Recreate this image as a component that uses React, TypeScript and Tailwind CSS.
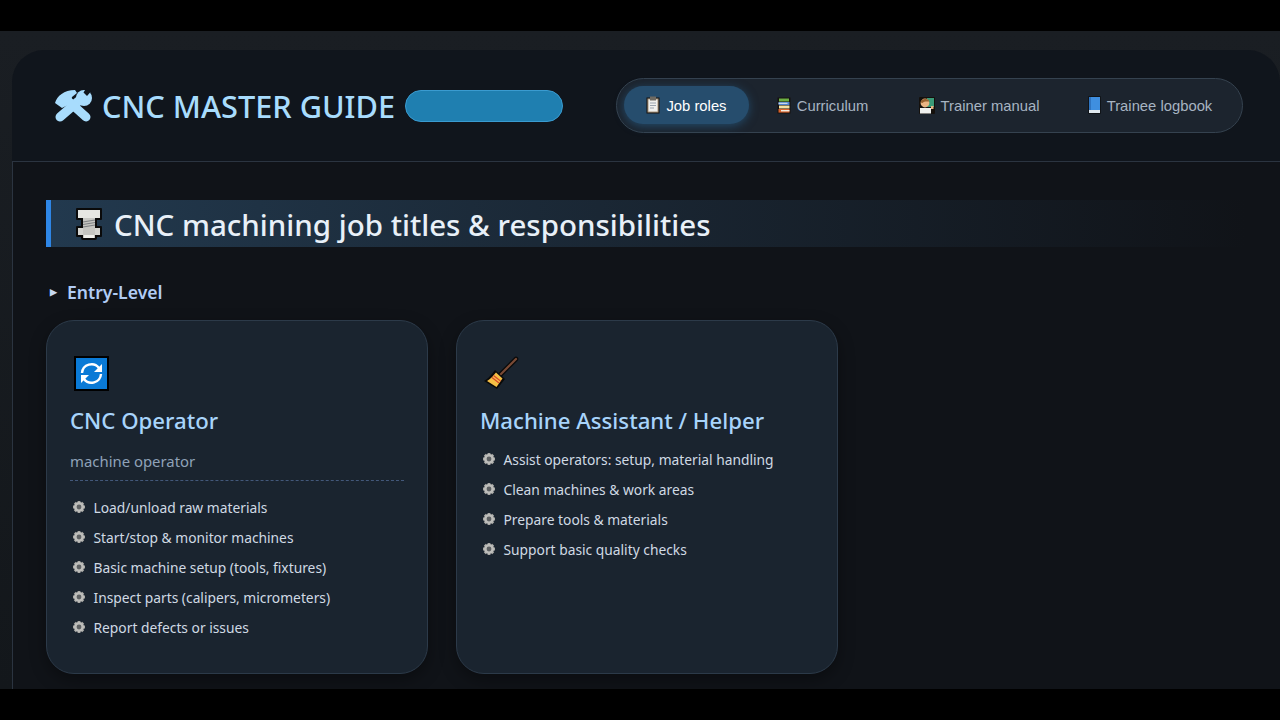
const sans = "font-['Noto_Sans','Open_Sans',sans-serif]"

// ─── Icons ────────────────────────────────────────────────────────────────────

function Tools() {
  return (
    <svg width="37" height="34" viewBox="0 0 37 34" className="shrink-0">
      <g fill="none" stroke="#a8dcfd" strokeLinecap="round">
        <path d="M5 28 L 27 9" strokeWidth="9" />
        <path d="M31 28 L 11 10" strokeWidth="9" />
      </g>
      <path d="M0 14 C 2 7 9 1 20 1 L 22 4 L 17 8 L 15 15 L 7 19 Z" fill="#a8dcfd" />
      <circle cx="29" cy="9" r="8" fill="#a8dcfd" />
      <path d="M38 0 L 32 7 L 28.5 3.5 L 32 -2 Z" fill="#10151c" />
    </svg>
  )
}

function Bolt() {
  return (
    <svg width="26" height="32" viewBox="0 0 26 32" className="shrink-0">
      <rect x="0" y="0" width="26" height="12" rx="1" fill="#0a0a0a" />
      <rect x="0" y="18" width="26" height="11" rx="1" fill="#0a0a0a" />
      <rect x="5" y="8" width="16" height="24" rx="2" fill="#0a0a0a" />
      <rect x="2" y="2" width="22" height="8" fill="#e6e6e2" />
      <rect x="2" y="20" width="22" height="7" fill="#d4d4d0" />
      <rect x="7" y="10" width="12" height="20" fill="#c6c6c2" />
      <path d="M7 14 L19 12 M7 16.5 L19 14.5 M7 19 L19 17" stroke="#7d8084" strokeWidth="1.1" />
      <rect x="8" y="27" width="10" height="3" fill="#f0f0ec" />
    </svg>
  )
}

function Repeat() {
  return (
    <svg width="35" height="35" viewBox="0 0 35 35" className="shrink-0">
      <rect x="1" y="1" width="33" height="33" fill="#0a7ad6" stroke="#000" strokeWidth="2" />
      <g fill="none" stroke="#fff" strokeWidth="2.4">
        <path d="M8 17 A 9.5 9.5 0 0 1 25 12" />
        <path d="M27 18 A 9.5 9.5 0 0 1 10 23" />
      </g>
      <path d="M28 8 V 16 H 20 Z M7 27 V 19 H 15 Z" fill="#fff" />
    </svg>
  )
}

function Broom() {
  return (
    <svg width="36" height="36" viewBox="0 0 36 36" className="shrink-0">
      <path d="M32 3 L 16 19" stroke="#0a0a0a" strokeWidth="4.6" strokeLinecap="round" />
      <path d="M32 3 L 16 19" stroke="#7a4a35" strokeWidth="2.2" strokeLinecap="round" />
      <path d="M11 14 L 21 23 L 13 33 L 0 25 C 4 23 8 18 11 14 Z" fill="#0a0a0a" />
      <path d="M12 16.5 L 18.5 22.5 L 12.5 31 L 3 25 C 6.5 23 10 19 12 16.5 Z" fill="#f5bf45" />
      <path d="M9.5 19.5 L 16.5 25 M8 21.5 L 15 27" stroke="#d8452c" strokeWidth="1.1" />
    </svg>
  )
}

function Gear() {
  return (
    <svg width="14" height="14" viewBox="0 0 14 14" className="shrink-0">
      <g stroke="#a9a9a6" strokeWidth="2.8">
        <path d="M7 1V13M1 7H13M2.8 2.8L11.2 11.2M11.2 2.8L2.8 11.2" />
      </g>
      <circle cx="7" cy="7" r="5" fill="#bdbdba" />
      <circle cx="7" cy="7" r="2.4" fill="#5d6062" />
    </svg>
  )
}

function Clipboard() {
  return (
    <svg width="14" height="18" viewBox="0 0 14 18" className="shrink-0">
      <rect x=".5" y="1.5" width="13" height="16" fill="#171310" />
      <rect x="1.5" y="2.5" width="11" height="14" fill="#a9977f" />
      <rect x="2.5" y="3.5" width="9" height="12" fill="#eff0ee" />
      <rect x="4" y=".5" width="6" height="4" fill="#6e6a62" />
      <path d="M4 7H10M4 9.5H10M4 12H8" stroke="#9aa4b0" strokeWidth="1" />
    </svg>
  )
}

function Books() {
  return (
    <svg width="14" height="17" viewBox="0 0 14 17" className="shrink-0">
      <rect x=".5" y=".5" width="13" height="16" fill="#15110e" />
      <rect x="2" y="1.5" width="10" height="3" fill="#6cb044" />
      <rect x="1.5" y="5" width="11" height="3" fill="#4f86d0" />
      <rect x="1.5" y="5.8" width="9" height="1" fill="#e8ecef" />
      <rect x="2" y="8.5" width="10.5" height="3" fill="#f3e2a3" />
      <rect x="1.5" y="12" width="11" height="3.6" fill="#d8622c" />
      <rect x="4" y="13" width="8.5" height="1.4" fill="#f2ede2" />
    </svg>
  )
}

function Teacher() {
  return (
    <svg width="16" height="17" viewBox="0 0 16 17" className="shrink-0">
      <rect x="0" y="0" width="16" height="17" fill="#14100c" rx="1" />
      <rect x="8" y="1" width="7" height="9" fill="#3a9a78" />
      <circle cx="6" cy="6" r="4.4" fill="#e9b483" />
      <path d="M1.6 5.5C1.6 1.5 9.5.5 10.5 4.5C8 4.5 5 4 3.5 6Z" fill="#96602f" />
      <rect x="1" y="11" width="11" height="5.5" fill="#eef0ee" />
      <rect x="12" y="9" width="2.5" height="3" fill="#e9b483" />
    </svg>
  )
}

function BlueBook() {
  return (
    <svg width="13" height="18" viewBox="0 0 13 18" className="shrink-0">
      <rect x="0" y="0" width="13" height="18" rx="1" fill="#101418" />
      <rect x="1" y="1" width="11" height="13" fill="#3f8fe0" />
      <rect x="1" y="14" width="11" height="3" fill="#dfe8ef" />
      <rect x="1" y="1" width="2" height="13" fill="#2f74c0" />
    </svg>
  )
}

// ─── Data ─────────────────────────────────────────────────────────────────────

const NAV = [
  { label: 'Curriculum', icon: <Books />, w: 'w-[147px]' },
  { label: 'Trainer manual', icon: <Teacher />, w: 'w-[166px]' },
  { label: 'Trainee logbook', icon: <BlueBook />, w: 'w-[176px]' },
]

const OPERATOR = [
  'Load/unload raw materials',
  'Start/stop & monitor machines',
  'Basic machine setup (tools, fixtures)',
  'Inspect parts (calipers, micrometers)',
  'Report defects or issues',
]

const HELPER = [
  'Assist operators: setup, material handling',
  'Clean machines & work areas',
  'Prepare tools & materials',
  'Support basic quality checks',
]

// ─── Parts ────────────────────────────────────────────────────────────────────

function Duties({ items }: { items: string[] }) {
  return (
    <ul className="flex flex-col gap-[10px]">
      {items.map(t => (
        <li key={t} className="flex h-[20px] items-center gap-[7.5px] pl-[2px] text-[13.8px] leading-[20px] text-[#d0dae4]">
          <span className="-mt-[3px]"><Gear /></span>
          {t}
        </li>
      ))}
    </ul>
  )
}

function Card({ icon, title, subtitle, items }: { icon: React.ReactNode; title: string; subtitle?: string; items: string[] }) {
  return (
    <div className="h-[354px] w-[382px] rounded-[28px] border border-[#2c3a49] bg-[#1a242f] px-[23px] pt-[35px] shadow-[0_6px_16px_rgba(0,0,0,0.35)]">
      <div className="ml-[4px] h-[35px]">{icon}</div>
      <h3 className="mt-[14px] text-[22.2px] font-medium leading-[32px] text-[#a8d4fb]">{title}</h3>
      {subtitle && (
        <div className="mt-[14px] h-[30px] border-b border-dashed border-[#43587a] text-[14.9px] leading-[20px] text-[#8fa2b8]">
          {subtitle}
        </div>
      )}
      <div className={subtitle ? 'mt-[17px]' : 'mt-[13px]'}>
        <Duties items={items} />
      </div>
    </div>
  )
}

export default function App() {
  return (
    <div className={`flex h-[720px] w-[1280px] flex-col overflow-hidden bg-black ${sans}`}>
      <div className="mt-[31px] h-[658px] overflow-hidden bg-gradient-to-b from-[#1a1e23] to-[#13171b] pl-[12px] pt-[19px]">
        <div className="h-[639px] rounded-t-[32px] bg-[#10151c]">
          <header className="flex h-[111px] items-center justify-between pl-[43px] pr-[37px]">
            <div className="flex items-center">
              <Tools />
              <h1 className="ml-[10px] text-[30.7px] font-medium leading-[40px] text-[#a8dcfd]">CNC MASTER GUIDE</h1>
              <span className="ml-[10px] h-[32px] w-[158px] rounded-full border border-[#3a9bd0] bg-[#1f7fb0]" />
            </div>
            <nav className="mb-[1px] flex h-[55px] w-[627px] items-center rounded-full border border-[#35424f] bg-[#1c242e] pl-[7px] font-['Liberation_Sans',sans-serif] text-[14.8px]">
              <a className="flex h-[38px] w-[125px] items-center justify-center gap-[6px] rounded-full bg-[#264d6d] text-white shadow-[0_2px_10px_rgba(38,90,130,0.7)]">
                <Clipboard />
                <span className="pt-[2px]">Job roles</span>
              </a>
              {NAV.map(n => (
                <a key={n.label} className={`flex h-[38px] items-center justify-center gap-[6px] text-[#a7b4c2] ${n.w}`}>
                  {n.icon}
                  <span className="pt-[2px]">{n.label}</span>
                </a>
              ))}
            </nav>
          </header>
          <main className="h-[528px] border-l border-t border-[#2b3440] bg-[#101318] pl-[33px] pt-[38px]">
            <h2 className="flex h-[47px] w-[1200px] items-center gap-[12px] border-l-[5px] border-[#2e86e6] bg-gradient-to-r from-[#22394e] to-[#101318] pl-[25px] text-[29.5px] font-medium text-[#e8f0f8]">
              <Bolt />
              <span className="pt-[4px]">CNC machining job titles &amp; responsibilities</span>
            </h2>
            <div className="mt-[32px] flex h-[26px] items-center gap-[10px] pl-[4px] text-[17.6px] font-semibold text-[#b0ccf5]">
              <span className="text-[9px] text-[#c8d8f0]">▶</span>
              Entry-Level
            </div>
            <div className="mt-[15px] flex gap-[28px]">
              <Card icon={<Repeat />} title="CNC Operator" subtitle="machine operator" items={OPERATOR} />
              <Card icon={<Broom />} title="Machine Assistant / Helper" items={HELPER} />
            </div>
          </main>
        </div>
      </div>
      <div className="flex-1 bg-black" />
    </div>
  )
}
